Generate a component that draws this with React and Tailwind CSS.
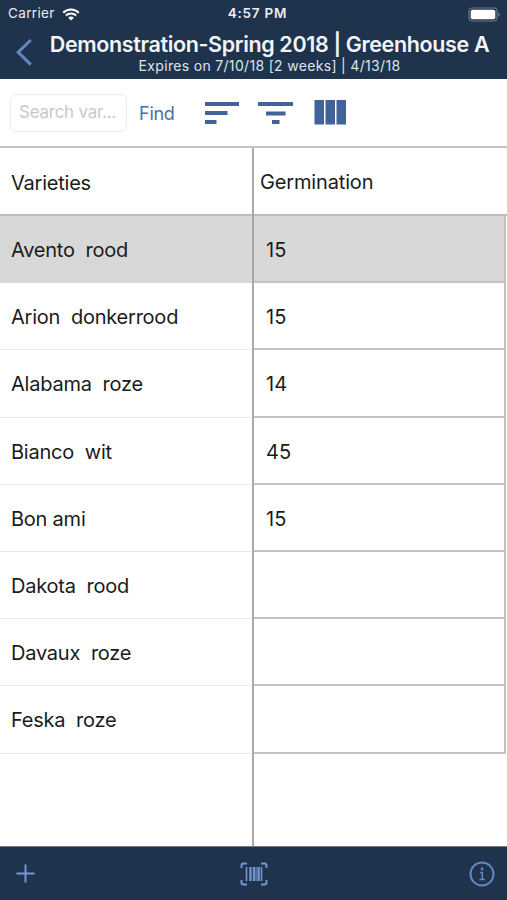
const rows = [
  ['Avento  rood', '15'],
  ['Arion  donkerrood', '15'],
  ['Alabama  roze', '14'],
  ['Bianco  wit', '45'],
  ['Bon ami', '15'],
  ['Dakota  rood', ''],
  ['Davaux  roze', ''],
  ['Feska  roze', ''],
];

function StatusBar() {
  return (
    <div className="flex h-7 items-center text-[13.5px] leading-none text-[#e9edf2]">
      <div className="flex flex-1 items-center gap-[7px] pl-[8px]">
        <span className="tracking-[0.35px]">Carrier</span>
        <svg width="18" height="13" viewBox="0 0 18 13" fill="none" stroke="#fff" strokeWidth="2.1">
          <path d="M1.2 4.7a11 11 0 0 1 15.6 0" />
          <path d="M3.9 7.6a7.2 7.2 0 0 1 10.2 0" />
          <path d="M9 12.6 6.2 9.8a4 4 0 0 1 5.6 0Z" fill="#fff" stroke="none" />
        </svg>
      </div>
      <span className="ml-[6px] text-[13.5px] font-semibold tracking-[0.75px]">4:57 PM</span>
      <div className="flex flex-1 justify-end pr-[6px]">
        <svg width="33" height="15" viewBox="0 0 33 15" fill="none">
          <rect x="1" y="1" width="28" height="13" rx="3.2" stroke="#6b7889" strokeWidth="1.2" />
          <rect x="2.7" y="2.7" width="24.6" height="9.6" rx="1.8" fill="#fff" />
          <path d="M30.5 5.2q2.4 2.3 0 4.6Z" fill="#8490a0" />
        </svg>
      </div>
    </div>
  );
}

function Header() {
  return (
    <header className="h-[79px] shrink-0 bg-[#20334c]">
      <StatusBar />
      <div className="flex h-[51px]">
        <div className="w-[32px] shrink-0 pl-[15px] pt-[10px]">
          <svg width="18" height="29" viewBox="0 0 18 29" fill="none" stroke="#6288c2" strokeWidth="3">
            <path d="M15.8 2 3.2 14.3 15.8 26.6" />
          </svg>
        </div>
        <div className="w-[475px] text-center whitespace-nowrap">
          <div className="mt-[2px] text-[21.5px] leading-7 font-semibold tracking-[-0.36px] text-[#f1f5fa]">
            Demonstration-Spring 2018 | Greenhouse A
          </div>
          <div className="text-[14px] leading-4 tracking-[0.32px] text-[#dde3eb]">
            Expires on 7/10/18 [2 weeks] | 4/13/18
          </div>
        </div>
      </div>
    </header>
  );
}

function Toolbar() {
  return (
    <div className="flex h-[67px] shrink-0 items-start">
      <div className="mt-[15px] ml-[10px] flex h-[38px] w-[117px] items-center rounded-[6px] border border-[#ececec] pl-[8px] text-[17px] tracking-[-0.25px] whitespace-nowrap text-[#c8c8cb]">
        Search var...
      </div>
      <div className="mt-[21px] ml-3 w-[50px] text-[18px] leading-7 tracking-[-0.25px] text-[#4a6fa8]">Find</div>
      <svg className="mt-[20px] ml-[15px]" width="145" height="27" viewBox="0 0 145 27" fill="#41639a">
        <rect x="1" y="3" width="34" height="4" />
        <rect x="1" y="12" width="22.5" height="4" />
        <rect x="1" y="21" width="11.5" height="4" />
        <rect x="54" y="3" width="35" height="4" />
        <rect x="62" y="12.5" width="19.5" height="4" />
        <rect x="68" y="21" width="7.5" height="4" />
        <rect x="110.5" y="1" width="9.5" height="24.5" />
        <rect x="121.5" y="1" width="9.5" height="24.5" />
        <rect x="132.5" y="1" width="9.5" height="24.5" />
      </svg>
    </div>
  );
}

function Table() {
  return (
    <main className="flex h-[700px] shrink-0 border-t-2 border-[#c3c3c3] text-[20px] whitespace-pre text-[#1b1b1b]">
      <div className="w-[254px] shrink-0 border-r-2 border-[#a9a9a9] tracking-[-0.23px]">
        <div className="flex h-[68px] items-center border-b-2 border-[#bcbcbc] pt-[3px] pl-[11px]">Varieties</div>
        {rows.map(([name], i) => (
          <div
            key={name}
            className={`flex h-[67.2px] items-center border-b pt-[2px] pl-[11px] ${i === 0 ? 'border-[#d8d8d8] bg-[#d8d8d8]' : 'border-[#e9e9e9]'}`}
          >
            {name}
          </div>
        ))}
      </div>
      <div className="flex-1">
        <div className="flex h-[68px] items-center border-b-2 border-[#bcbcbc] pt-[2px] pl-[6px] tracking-[-0.15px]">
          Germination
        </div>
        {rows.map(([name, value], i) => (
          <div
            key={name}
            className={`mr-[1px] flex h-[67.2px] items-center border-r-2 border-b-2 border-[#c3c3c3] pt-[3px] pl-[12px] ${i === 0 ? 'bg-[#d8d8d8]' : ''}`}
          >
            {value}
          </div>
        ))}
      </div>
    </main>
  );
}

function Footer() {
  return (
    <footer className="flex h-[54px] shrink-0 items-center justify-between border-t border-[#6c7a83] bg-[#20334c] pr-[12px] pl-[16px]">
      <svg width="19" height="19" viewBox="0 0 19 19" stroke="#7396cf" strokeWidth="2">
        <path d="M9.5 .5v18M.5 9.5h18" />
      </svg>
      <svg className="ml-[3px]" width="28" height="24" viewBox="0 0 28 24" fill="none" stroke="#7396cf" strokeWidth="2">
        <path d="M1.5 6V3.5q0-2 2-2H7M21 1.5h3.5q2 0 2 2V6M26.5 18v2.500q0 2-2 2H21M7 22.500H3.500q-2 0-2-2V18" />
        <path d="M6.500 5v14M21.500 5v14" strokeWidth="1.600" />
        <path d="M10.500 5v14M14 5v14M18.600 5v14" strokeWidth="2.400" />
        <path d="M16.100 5v14" strokeWidth="1" />
      </svg>
      <svg width="26" height="26" viewBox="0 0 26 26" fill="none" stroke="#6288c2" strokeWidth="2">
        <circle cx="13" cy="13" r="11.500" />
        <path d="M11 11.500h2.300v7M10.500 18.500h5.500" strokeWidth="1.600" />
        <circle cx="13" cy="8" r="1.400" fill="#6288c2" stroke="none" />
      </svg>
    </footer>
  );
}

export default function App() {
  return (
    <div className="flex h-[900px] w-[507px] flex-col overflow-hidden bg-white font-['Inter',sans-serif]">
      <Header />
      <Toolbar />
      <Table />
      <Footer />
    </div>
  );
}
